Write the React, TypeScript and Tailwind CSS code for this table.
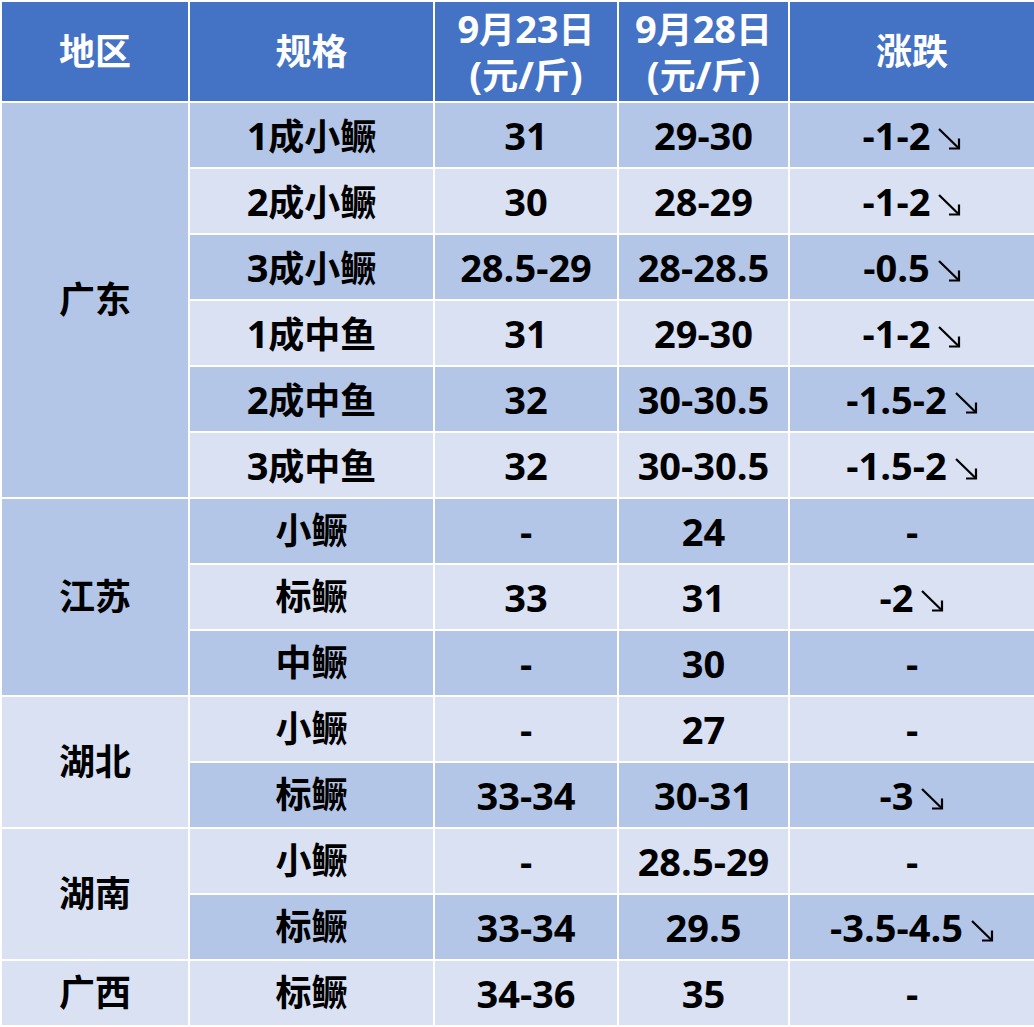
import React from "react";

type Row = { region?: string; span?: number; regionDark?: boolean; spec: string; a: string; b: string; c: string; arrow?: boolean };

const rows: Row[] = [
  { region: "广东", span: 6, regionDark: true, spec: "1成小鳜", a: "31", b: "29-30", c: "-1-2", arrow: true },
  { spec: "2成小鳜", a: "30", b: "28-29", c: "-1-2", arrow: true },
  { spec: "3成小鳜", a: "28.5-29", b: "28-28.5", c: "-0.5", arrow: true },
  { spec: "1成中鱼", a: "31", b: "29-30", c: "-1-2", arrow: true },
  { spec: "2成中鱼", a: "32", b: "30-30.5", c: "-1.5-2", arrow: true },
  { spec: "3成中鱼", a: "32", b: "30-30.5", c: "-1.5-2", arrow: true },
  { region: "江苏", span: 3, regionDark: true, spec: "小鳜", a: "-", b: "24", c: "-" },
  { spec: "标鳜", a: "33", b: "31", c: "-2", arrow: true },
  { spec: "中鳜", a: "-", b: "30", c: "-" },
  { region: "湖北", span: 2, regionDark: false, spec: "小鳜", a: "-", b: "27", c: "-" },
  { spec: "标鳜", a: "33-34", b: "30-31", c: "-3", arrow: true },
  { region: "湖南", span: 2, regionDark: false, spec: "小鳜", a: "-", b: "28.5-29", c: "-" },
  { spec: "标鳜", a: "33-34", b: "29.5", c: "-3.5-4.5", arrow: true },
  { region: "广西", span: 1, regionDark: false, spec: "标鳜", a: "34-36", b: "35", c: "-" },
];

const cell = "border-2 border-white text-center align-middle p-0";

function T({ s }: { s: string }) {
  const parts = s.match(/[\u4e00-\u9fff]+|[^\u4e00-\u9fff]+/g) || [];
  return (
    <span className="whitespace-nowrap">
      {parts.map((p, i) =>
        /[\u4e00-\u9fff]/.test(p) ? (
          <span key={i} className="text-[36px]">{p}</span>
        ) : (
          <span key={i} className="text-[38px]">{p}</span>
        )
      )}
    </span>
  );
}

function Arrow() {
  return (
    <span className="inline-block align-baseline ml-[7px]">
      <svg width="24" height="23" viewBox="0 0 24 23" className="block">
        <line x1="2" y1="2" x2="21" y2="20.5" stroke="black" strokeWidth="2.2" strokeLinecap="butt" />
        <path d="M22 11.5 L22 21.5 L12 21.5" fill="none" stroke="black" strokeWidth="2.2" strokeLinejoin="miter" />
      </svg>
    </span>
  );
}

export default function App() {
  return (
    <div className="w-[1034px] h-[1027px] bg-white overflow-hidden">
      <table
        className="border-collapse table-fixed w-[1034px] text-[36px] font-bold leading-none text-black"
        style={{ fontFamily: '"Open Sans", "Noto Sans CJK SC", sans-serif' }}
      >
        <colgroup>
          <col className="w-[188px]" />
          <col className="w-[245px]" />
          <col className="w-[184px]" />
          <col className="w-[171px]" />
          <col className="w-[246px]" />
        </colgroup>
        <thead>
          <tr className="h-[101px] bg-[#4472c4] text-white">
            <th className={cell}><T s="地区" /></th>
            <th className={cell}><T s="规格" /></th>
            <th className={cell}>
              <div className="leading-[46px] h-[46px] -mt-[1px]"><T s="9月23日" /></div>
              <div className="leading-[46px] h-[46px]"><T s="(元/斤)" /></div>
            </th>
            <th className={cell}>
              <div className="leading-[46px] h-[46px] -mt-[1px]"><T s="9月28日" /></div>
              <div className="leading-[46px] h-[46px]"><T s="(元/斤)" /></div>
            </th>
            <th className={cell}><T s="涨跌" /></th>
          </tr>
        </thead>
        <tbody>
          {rows.map((r, i) => {
            const bg = i % 2 === 0 ? "bg-[#b4c6e7]" : "bg-[#d9e1f2]";
            return (
              <tr key={i} className="h-[66px]">
                {r.region && (
                  <td rowSpan={r.span} className={`${cell} ${r.regionDark ? "bg-[#b4c6e7]" : "bg-[#d9e1f2]"}`}>
                    <T s={r.region} />
                  </td>
                )}
                <td className={`${cell} ${bg}`}><T s={r.spec} /></td>
                <td className={`${cell} ${bg}`}><T s={r.a} /></td>
                <td className={`${cell} ${bg}`}><T s={r.b} /></td>
                <td className={`${cell} ${bg}`}>
                  <span className="whitespace-nowrap">
                    <T s={r.c} />
                    {r.arrow && <Arrow />}
                  </span>
                </td>
              </tr>
            );
          })}
        </tbody>
      </table>
    </div>
  );
}
